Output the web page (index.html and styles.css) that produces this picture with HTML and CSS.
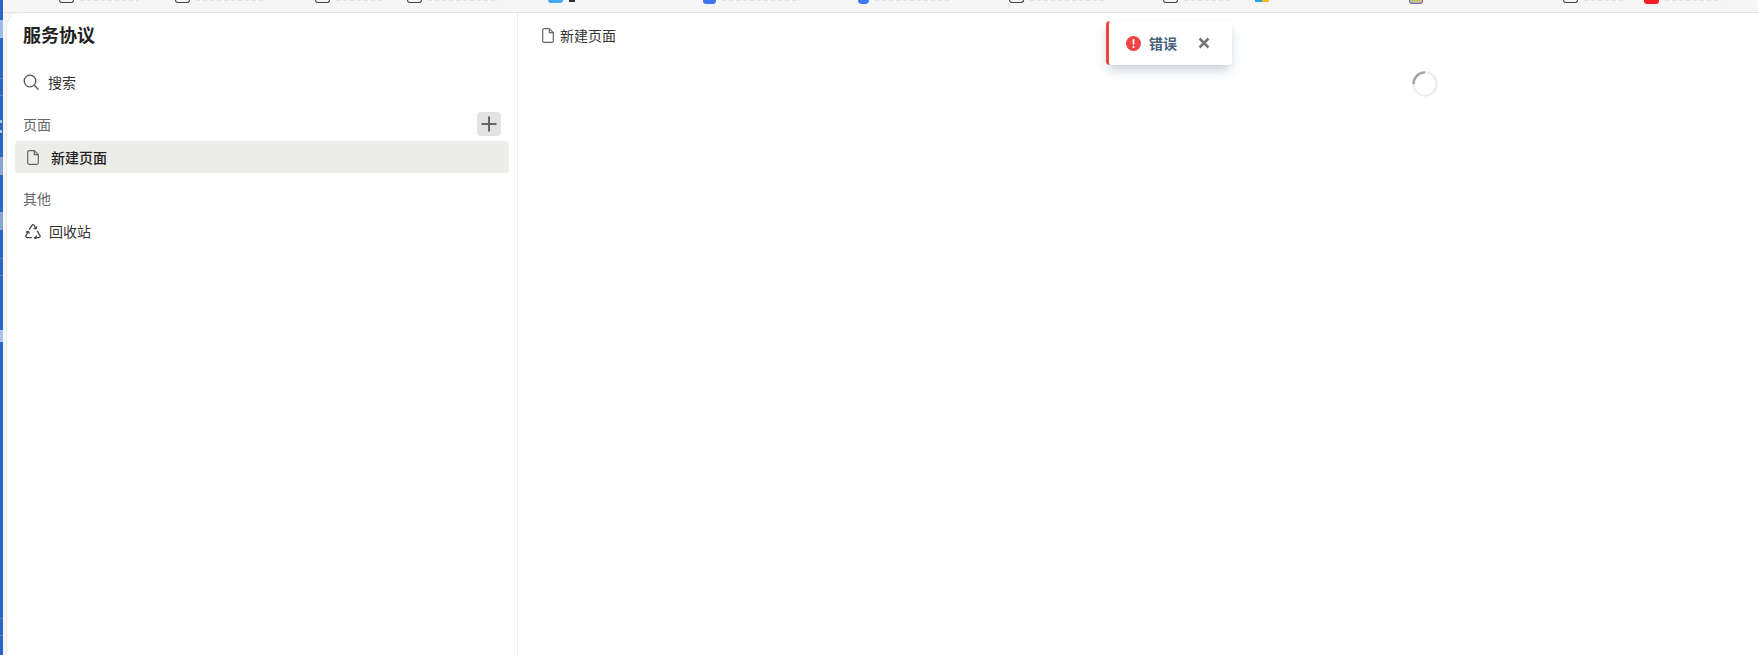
FILE: index.html
```html
<!DOCTYPE html>
<html lang="zh-CN">
<head>
<meta charset="UTF-8">
<meta name="viewport" content="width=device-width, initial-scale=1.0">
<title>服务协议</title>
<link rel="stylesheet" href="styles.css">
</head>
<body>

<!-- Browser bookmarks, cut off by the top of the shot -->
<div class="bookmarks">
<div class="mark"><span class="tile"></span><span class="mark-text"></span></div>
<div class="mark"><span class="tile"></span><span class="mark-text"></span></div>
<div class="mark"><span class="tile"></span><span class="mark-text"></span></div>
<div class="mark"><span class="tile"></span><span class="mark-text"></span></div>
<div class="mark"><span class="tile tile-sky"></span><span class="mark-dark"></span></div>
<div class="mark"><span class="tile tile-blue"></span><span class="mark-text"></span></div>
<div class="mark"><span class="tile tile-blue tile-small"></span><span class="mark-text"></span></div>
<div class="mark"><span class="tile"></span><span class="mark-text"></span></div>
<div class="mark"><span class="tile"></span><span class="mark-text"></span></div>
<div class="mark"><span class="tile tile-ms"></span></div>
<div class="mark"><span class="tile tile-purple"></span></div>
<div class="mark"><span class="tile"></span><span class="mark-text"></span></div>
<div class="mark"><span class="tile tile-red"></span><span class="mark-text"></span></div>
</div>

<div class="desk">
<div class="desk-strip"></div>

<div class="app">
<!-- Sidebar -->
<div class="sidebar">
<div class="space-title">服务协议</div>

<div class="search-row">
<svg class="icon-search" viewBox="0 0 16 16" fill="none" stroke="#555" stroke-width="1.3" stroke-linecap="round">
<circle cx="7" cy="7" r="5.8"/>
<path d="M11.3 11.3L15.2 15.2"/>
</svg>
<span>搜索</span>
</div>

<div class="section-head">
<span>页面</span>
<div class="add-btn">
<svg viewBox="0 0 16 16" fill="none" stroke="#666" stroke-width="2"><path d="M8 0.5V15.5M0.5 8H15.5"/></svg>
</div>
</div>

<div class="page-row active">
<svg class="icon-file" viewBox="0 0 12 15" fill="none" stroke="#666" stroke-width="1.2" stroke-linejoin="round">
<path d="M2 .7H7.3L11.3 4.7V12.8A1.5 1.5 0 0 1 9.8 14.3H2.2A1.5 1.5 0 0 1 .7 12.8V2A1.3 1.3 0 0 1 2 .7Z"/>
<path d="M7.3 .7V4.7H11.3"/>
</svg>
<span>新建页面</span>
</div>

<div class="section-head section-other"><span>其他</span></div>

<div class="trash-row">
<svg class="icon-recycle" viewBox="0 0 16 15" fill="none" stroke="#4a4a4a" stroke-width="1.3" stroke-linecap="round" stroke-linejoin="round">
<path d="M4.6 5.2L6.9 1.3C7.4.5 8.6.5 9.1 1.3L11 4.6"/>
<path d="M8.9 4.4L11 4.8L11.7 2.8"/>
<path d="M12.4 7.2L15 11.6C15.5 12.6 14.8 13.7 13.7 13.7H9.8"/>
<path d="M11.4 12.1L9.6 13.7L11.4 15"/>
<path d="M6.4 13.7H2.3C1.2 13.7.5 12.6 1 11.6L3.3 7.5"/>
<path d="M1.3 8.1L3.4 7.3L4.2 9.2"/>
</svg>
<span>回收站</span>
</div>
</div>

<!-- Main -->
<div class="main">
<div class="crumb">
<svg class="icon-file" viewBox="0 0 12 15" fill="none" stroke="#666" stroke-width="1.2" stroke-linejoin="round">
<path d="M2 .7H7.3L11.3 4.7V12.8A1.5 1.5 0 0 1 9.8 14.3H2.2A1.5 1.5 0 0 1 .7 12.8V2A1.3 1.3 0 0 1 2 .7Z"/>
<path d="M7.3 .7V4.7H11.3"/>
</svg>
<span>新建页面</span>
</div>
<div class="loading">
<svg class="spinner" viewBox="0 0 26 26" fill="none" stroke-width="2.4">
<circle cx="13" cy="13" r="11.6" stroke="#eeeeee"/>
<path d="M1.4 13A11.6 11.6 0 0 1 13 1.4" stroke="#a3a3a3"/>
</svg>
</div>
</div>
</div>
</div>

<!-- Error toast -->
<div class="toast">
<svg class="toast-icon" viewBox="0 0 16 16">
<circle cx="8" cy="8" r="8" fill="#ef4444"/>
<rect x="7" y="3.2" width="2" height="6" rx="1" fill="#fff"/>
<circle cx="8" cy="11.8" r="1.15" fill="#fff"/>
</svg>
<span class="toast-text">错误</span>
<svg class="toast-close" viewBox="0 0 12 12" fill="none" stroke="#777" stroke-width="2.6"><path d="M1.5 1.5L10.5 10.5M10.5 1.5L1.5 10.5"/></svg>
</div>

</body>
</html>
```

FILE: styles.css
```css
* {
margin: 0;
padding: 0;
box-sizing: border-box;
font-family: "Noto Sans CJK SC", "Liberation Sans", sans-serif;
}

body {
height: 100vh;
overflow: hidden;
display: flex;
flex-direction: column;
background: #f6f6f6;
color: #2b2b2b;
font-size: 14px;
}

svg {
display: block;
flex-shrink: 0;
}

/* Bookmarks bar */
.bookmarks {
height: 13px;
flex-shrink: 0;
display: flex;
align-items: flex-start;
padding-left: 59px;
background: #f6f6f6;
border-bottom: 1px solid #e4e4e4;
overflow: hidden;
}

.mark {
display: flex;
gap: 6px;
flex-shrink: 0;
}

.mark:nth-child(1) { width: 116px; }
.mark:nth-child(2) { width: 140px; }
.mark:nth-child(3) { width: 92px; }
.mark:nth-child(4) { width: 141px; }
.mark:nth-child(5) { width: 155px; }
.mark:nth-child(6) { width: 155px; }
.mark:nth-child(7) { width: 151px; }
.mark:nth-child(8) { width: 154px; }
.mark:nth-child(9) { width: 92px; }
.mark:nth-child(10) { width: 154px; }
.mark:nth-child(11) { width: 154px; }
.mark:nth-child(12) { width: 81px; }
.mark:nth-child(13) { width: 114px; }

.tile {
width: 15px;
height: 3px;
flex-shrink: 0;
border: 1px solid #444;
border-top: none;
border-radius: 0 0 3px 3px;
}

.tile-sky {
background: #45a8f5;
border: none;
}

.tile-blue {
background: #3f78f2;
border: none;
width: 13px;
height: 4px;
}

.tile-small {
width: 11px;
border-radius: 0 0 6px 6px;
}

.tile-ms {
width: 14px;
height: 2px;
background: linear-gradient(90deg, #1ea5ee 50%, #fdb913 50%);
border: none;
border-radius: 0;
}

.tile-purple {
width: 14px;
height: 4px;
background: linear-gradient(90deg, #9ad08a, #e8b070);
border-color: #6c68b5;
}

.tile-red {
background: #f62020;
border: none;
width: 15px;
height: 4px;
}

.mark-text {
flex: 0 0 50%;
height: 1px;
background: repeating-linear-gradient(90deg, #e2e2e2 0 4px, transparent 4px 7px);
}

.mark-dark {
width: 6px;
height: 2px;
background: #333;
}

/* Desktop behind the window */
.desk {
flex: 1;
display: flex;
min-height: 0;
}

.desk-strip {
width: 3px;
flex-shrink: 0;
margin-top: -13px;
background:
linear-gradient(#9dbbe6, #9dbbe6) 0 20px / 3px 18px no-repeat,
linear-gradient(#4f82d0, #4f82d0) 0 78px / 3px 1px no-repeat,
linear-gradient(#4f82d0, #4f82d0) 0 95px / 3px 1px no-repeat,
linear-gradient(#a9c2e8, #a9c2e8) 0 120px / 2px 3px no-repeat,
linear-gradient(#a9c2e8, #a9c2e8) 0 130px / 2px 3px no-repeat,
linear-gradient(#8aa6cf, #8aa6cf) 0 157px / 3px 18px no-repeat,
linear-gradient(#8aa6cf, #8aa6cf) 0 212px / 3px 18px no-repeat,
linear-gradient(#4f82d0, #4f82d0) 0 258px / 3px 1px no-repeat,
linear-gradient(#4f82d0, #4f82d0) 0 275px / 3px 1px no-repeat,
linear-gradient(#a9c2e8, #a9c2e8) 0 330px / 3px 12px no-repeat,
linear-gradient(#4f82d0, #4f82d0) 0 618px / 3px 1px no-repeat,
linear-gradient(#4f82d0, #4f82d0) 0 635px / 3px 1px no-repeat,
#2a66c4;
}

.app {
flex: 1;
display: flex;
margin-left: 3px;
background: #fff;
border-top-left-radius: 14px;
border-left: 1px solid #e8e8e8;
}

/* Sidebar */
.sidebar {
width: 511px;
flex-shrink: 0;
padding: 0 8px;
border-right: 1px solid #ececec;
}

.space-title {
padding: 9px 0 0 8px;
height: 48px;
font-size: 18px;
line-height: 24px;
font-weight: 700;
color: #222;
}

.search-row {
height: 32px;
margin-top: 5px;
display: flex;
align-items: center;
padding-left: 8px;
gap: 9px;
color: #333;
}

.icon-search {
width: 16px;
height: 16px;
}

.section-head {
display: flex;
justify-content: space-between;
align-items: center;
height: 24px;
margin-top: 14px;
padding: 0 8px;
color: #666;
}

.add-btn {
width: 24px;
height: 24px;
border-radius: 4px;
background: #e3e3e3;
display: flex;
align-items: center;
justify-content: center;
}

.add-btn svg {
width: 16px;
height: 16px;
}

.page-row {
height: 32px;
margin-top: 5px;
display: flex;
align-items: center;
gap: 12px;
padding-left: 12px;
border-radius: 4px;
}

.page-row.active {
background: #ecece8;
font-weight: 500;
color: #222;
}

.icon-file {
width: 12px;
height: 15px;
}

.section-other {
margin-top: 13px;
}

.trash-row {
height: 32px;
margin-top: 5px;
display: flex;
align-items: center;
gap: 8px;
padding-left: 10px;
color: #333;
}

.icon-recycle {
width: 16px;
height: 15px;
}

/* Main */
.main {
flex: 1;
min-width: 0;
}

.crumb {
display: flex;
align-items: center;
gap: 6px;
height: 44px;
padding: 0 0 0 24px;
color: #333;
}

.loading {
display: flex;
justify-content: center;
padding-left: 574px;
margin-top: 14px;
}

.spinner {
width: 26px;
height: 26px;
}

/* Error toast */
.toast {
position: absolute;
top: 21px;
left: 1106px;
width: 126px;
height: 44px;
display: flex;
align-items: center;
padding-left: 17px;
background: #fff;
border-left: 3px solid #ef4444;
border-radius: 4px;
box-shadow: 0 6px 12px -2px rgba(50, 80, 120, 0.3), 0 0 2px rgba(0, 0, 0, 0.04);
}

.toast-icon {
width: 15px;
height: 15px;
}

.toast-text {
margin-left: 8px;
font-size: 14px;
font-weight: 700;
color: #46607a;
}

.toast-close {
width: 12px;
height: 12px;
margin-left: 21px;
}
```
